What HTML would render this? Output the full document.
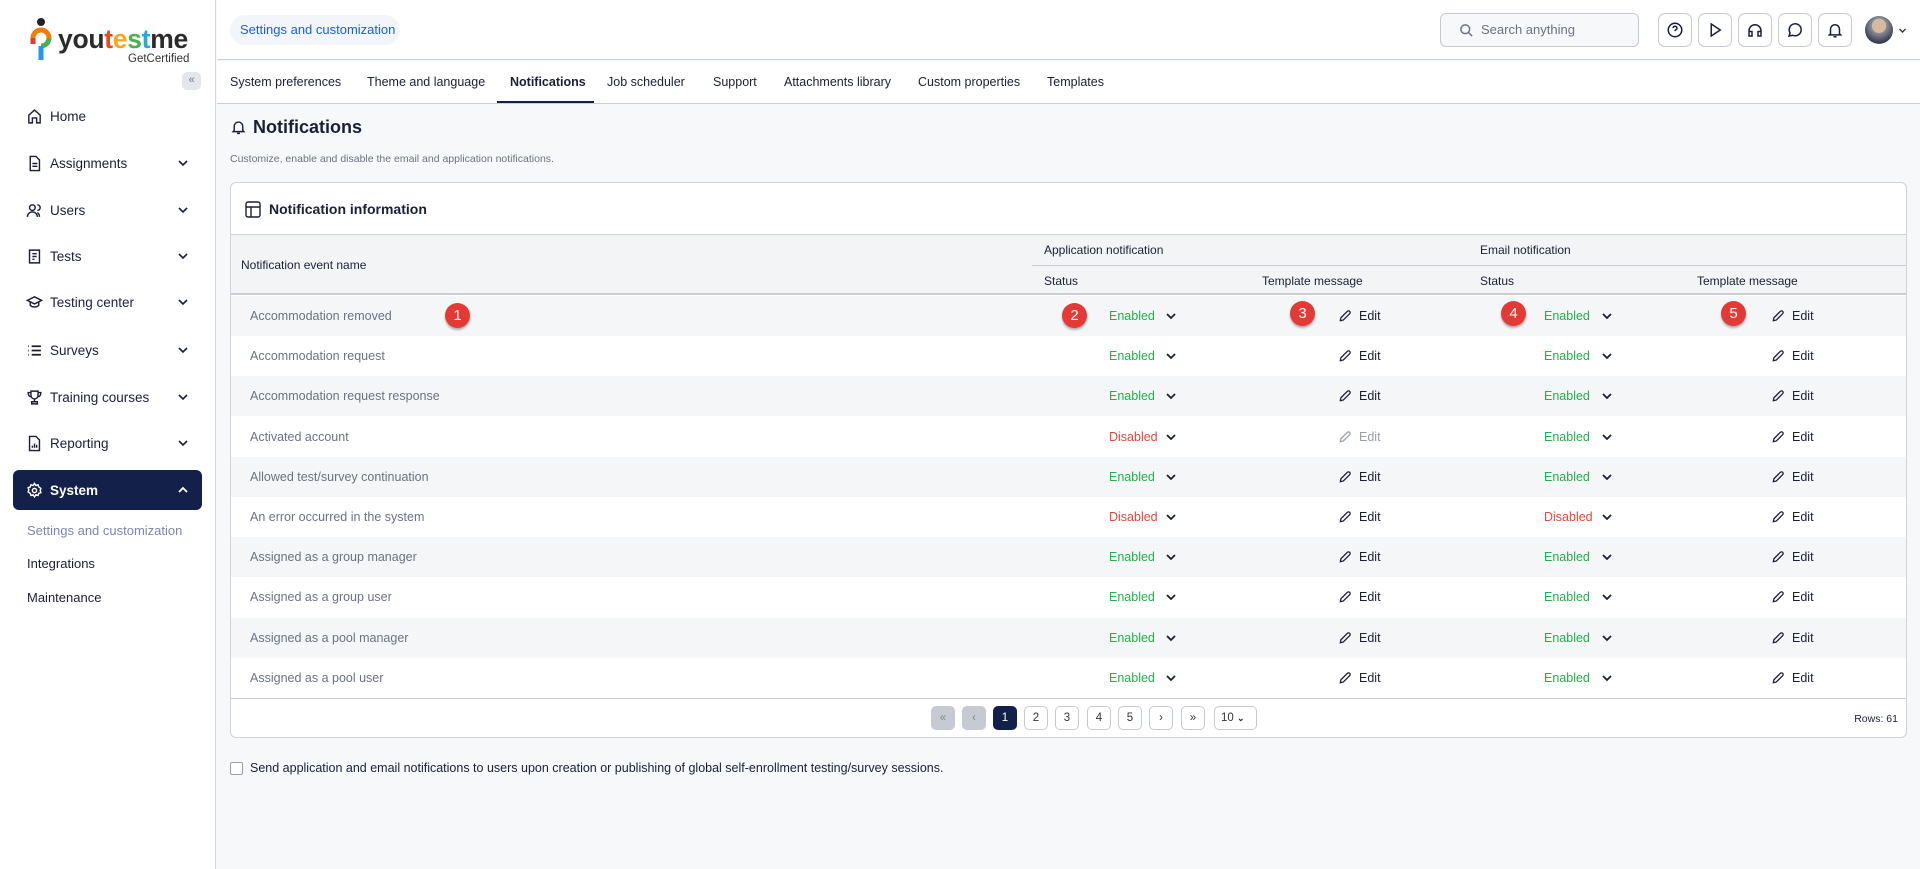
<!DOCTYPE html>
<html><head><meta charset="utf-8"><style>
*{box-sizing:border-box;margin:0;padding:0}
body{width:1920px;height:869px;overflow:hidden;font-family:"Liberation Sans",sans-serif;background:#f7f8fa;color:#1a1f36;position:relative}
.abs{position:absolute}
#side{left:0;top:0;width:216px;height:869px;background:#fff;border-right:1px solid #d5d9e0}
.mi{position:absolute;left:26px;font-size:13.5px;color:#1a1f36;display:flex;align-items:center;height:20px}
.mi svg{width:17px;height:17px;margin-right:7px}
.chev{position:absolute;left:177px;width:12px;height:12px}
#hdr{left:217px;top:0;right:0;height:60px;background:#fff;border-bottom:1px solid #c9ced6}
#tabs{left:217px;top:61px;right:0;height:43px;background:#fff;border-bottom:1px solid #c9ced6}
.tab{position:absolute;top:14px;font-size:12.5px;color:#1a1f36}
.ib{position:absolute;top:13px;width:34px;height:34px;border:1px solid #c5cad3;border-radius:7px;background:#fff;display:flex;align-items:center;justify-content:center}
.ib svg{width:18px;height:18px}
#card{left:230px;top:182px;width:1677px;height:556px;background:#fff;border:1px solid #cfd4db;border-radius:6px;overflow:hidden}
.row{position:absolute;left:0;width:1677px;height:40px;font-size:12.5px}
.row.g{background:#f5f6f8}
.row span{position:absolute;top:13px}
.nm{left:19px;color:#6b7280}
.en{color:#22b04a}.di{color:#f0453a}
.badge{position:absolute;width:25px;height:25px;border-radius:50%;background:#e53935;color:#fff;font-size:15px;text-align:center;line-height:25px;box-shadow:0 2px 2px rgba(0,0,0,.3)}
.pg{position:absolute;top:706px;width:24px;height:24px;border:1px solid #c5cad3;border-radius:5px;font-size:11.5px;text-align:center;line-height:22px;color:#333;background:#fff}
</style></head><body>
<div id="side" class="abs">
  <svg class="abs" style="left:30px;top:18px" width="22" height="46" viewBox="0 0 22 46"><circle cx="11" cy="4" r="4" fill="#222"/><path d="M3 20a8 8 0 0 1 16 0" stroke="#f57c00" stroke-width="5" fill="none"/><path d="M19 20a8 8 0 0 1-8 8" stroke="#4caf50" stroke-width="5" fill="none"/><path d="M11 28v14" stroke="#2196f3" stroke-width="5"/><path d="M3 20v6" stroke="#e53935" stroke-width="5"/></svg>
  <div class="abs" style="left:58px;top:24px;font-size:26.5px;font-weight:bold;letter-spacing:-0.3px;color:#2b2b2b">you<span style="color:#e8491d">t</span><span style="color:#f5a623">e</span><span style="color:#4caf50">s</span><span style="color:#29a8e0">t</span>me</div>
  <div class="abs" style="left:128px;top:53px;font-size:11.5px;color:#333">GetCertified</div>
  <div class="abs" style="left:182px;top:72px;width:19px;height:18px;background:#e3e6ea;border-radius:5px;font-size:11px;color:#777;text-align:center;line-height:17px">«</div>
  <div class="mi" style="top:106px"><svg viewBox="0 0 24 24" fill="none" stroke="#1a1f36" stroke-width="2"><path d="M4 21V10l8-7 8 7v11h-5v-7H9v7z"/></svg>Home</div>
  <div class="mi" style="top:153px"><svg viewBox="0 0 24 24" fill="none" stroke="#1a1f36" stroke-width="2"><path d="M6 2h8l5 5v15H6z M9 12h7M9 16h7"/></svg>Assignments</div>
  <div class="mi" style="top:200px"><svg viewBox="0 0 24 24" fill="none" stroke="#1a1f36" stroke-width="2"><circle cx="9" cy="8" r="4"/><path d="M2 21c0-4 3-7 7-7s7 3 7 7M16 4a4 4 0 0 1 0 8M19 21c0-3-1-5-3-6"/></svg>Users</div>
  <div class="mi" style="top:246px"><svg viewBox="0 0 24 24" fill="none" stroke="#1a1f36" stroke-width="2"><path d="M5 3h14v18H5z M9 8h6M9 12h6M9 16h3"/></svg>Tests</div>
  <div class="mi" style="top:292px"><svg viewBox="0 0 24 24" fill="none" stroke="#1a1f36" stroke-width="2"><path d="M2 9l10-5 10 5-10 5z M6 11v5c3 3 9 3 12 0v-5"/></svg>Testing center</div>
  <div class="mi" style="top:340px"><svg viewBox="0 0 24 24" fill="none" stroke="#1a1f36" stroke-width="2.4"><path d="M3 6h1M3 12h1M3 18h1M8 6h13M8 12h13M8 18h13"/></svg>Surveys</div>
  <div class="mi" style="top:387px"><svg viewBox="0 0 24 24" fill="none" stroke="#1a1f36" stroke-width="2"><path d="M7 3h10v6a5 5 0 0 1-10 0z M7 5H3c0 4 2 6 4 6M17 5h4c0 4-2 6-4 6M12 14v4M8 21h8v-3H8z"/></svg>Training courses</div>
  <div class="mi" style="top:433px"><svg viewBox="0 0 24 24" fill="none" stroke="#1a1f36" stroke-width="2"><path d="M5 2h9l5 5v15H5z M9 18v-3M12 18v-6M15 18v-4"/></svg>Reporting</div>
  <svg class="chev" style="top:157px" viewBox="0 0 12 12"><path d="M2 4l4 4 4-4" stroke="#1a1f36" stroke-width="1.6" fill="none"/></svg>
  <svg class="chev" style="top:204px" viewBox="0 0 12 12"><path d="M2 4l4 4 4-4" stroke="#1a1f36" stroke-width="1.6" fill="none"/></svg>
  <svg class="chev" style="top:250px" viewBox="0 0 12 12"><path d="M2 4l4 4 4-4" stroke="#1a1f36" stroke-width="1.6" fill="none"/></svg>
  <svg class="chev" style="top:296px" viewBox="0 0 12 12"><path d="M2 4l4 4 4-4" stroke="#1a1f36" stroke-width="1.6" fill="none"/></svg>
  <svg class="chev" style="top:344px" viewBox="0 0 12 12"><path d="M2 4l4 4 4-4" stroke="#1a1f36" stroke-width="1.6" fill="none"/></svg>
  <svg class="chev" style="top:391px" viewBox="0 0 12 12"><path d="M2 4l4 4 4-4" stroke="#1a1f36" stroke-width="1.6" fill="none"/></svg>
  <svg class="chev" style="top:437px" viewBox="0 0 12 12"><path d="M2 4l4 4 4-4" stroke="#1a1f36" stroke-width="1.6" fill="none"/></svg>
  <div class="abs" style="left:13px;top:470px;width:189px;height:40px;background:#13204a;border-radius:6px"></div>
  <div class="mi" style="top:480px;color:#fff;font-weight:bold"><svg viewBox="0 0 24 24" fill="none" stroke="#fff" stroke-width="2"><circle cx="12" cy="12" r="3"/><path d="M12 2l2 3 3-1 1 3 3 2-1 3 1 3-3 1-1 3-3-1-2 3-2-3-3 1-1-3-3-2 1-3-1-3 3-1 1-3 3 1z"/></svg>System</div>
  <svg class="chev" style="top:484px" viewBox="0 0 12 12"><path d="M2 8l4-4 4 4" stroke="#fff" stroke-width="1.8" fill="none"/></svg>
  <div class="abs" style="left:27px;top:523px;font-size:13px;color:#7d86b0">Settings and customization</div>
  <div class="abs" style="left:27px;top:556px;font-size:13px">Integrations</div>
  <div class="abs" style="left:27px;top:590px;font-size:13px">Maintenance</div>
</div>

<div id="hdr" class="abs">
  <div class="abs" style="left:13px;top:15px;width:170px;height:30px;background:#f2f5fa;border-radius:15px;font-size:13px;color:#1a5fd6;line-height:30px;padding-left:10px">Settings and customization</div>
  <div class="abs" style="left:1223px;top:13px;width:199px;height:34px;border:1px solid #c5cad3;border-radius:6px;background:#f7f8fa;font-size:13px;color:#6b7280;line-height:32px;padding-left:40px">Search anything
    <svg class="abs" style="left:18px;top:9px" width="15" height="15" viewBox="0 0 24 24" fill="none" stroke="#6b7280" stroke-width="2.4"><circle cx="10" cy="10" r="7"/><path d="M15 15l6 6"/></svg></div>
  <div class="ib" style="left:1441px"><svg viewBox="0 0 24 24" fill="none" stroke="#1a1f36" stroke-width="2"><circle cx="12" cy="12" r="9"/><path d="M9.5 9.5a2.5 2.5 0 1 1 3.5 2.3c-.7.4-1 1-1 1.7M12 17h.01"/></svg></div>
  <div class="ib" style="left:1481px"><svg viewBox="0 0 24 24" fill="none" stroke="#1a1f36" stroke-width="2"><path d="M7 4l12 8-12 8z"/></svg></div>
  <div class="ib" style="left:1521px"><svg viewBox="0 0 24 24" fill="none" stroke="#1a1f36" stroke-width="2"><path d="M4 17v-4a8 8 0 0 1 16 0v4M4 14h4v6H4zM16 14h4v6h-4z"/></svg></div>
  <div class="ib" style="left:1561px"><svg viewBox="0 0 24 24" fill="none" stroke="#1a1f36" stroke-width="2"><path d="M4 20l1.5-4A8 8 0 1 1 9 19z"/></svg></div>
  <div class="ib" style="left:1601px"><svg viewBox="0 0 24 24" fill="none" stroke="#1a1f36" stroke-width="2"><path d="M6 17V11a6 6 0 0 1 12 0v6l1.5 1.5h-15zM10 21h4"/></svg></div>
  <div class="abs" style="left:1648px;top:16px;width:28px;height:28px;border-radius:50%;background:radial-gradient(circle at 50% 35%,#d9b9a0 0 30%,#8a8f99 32%,#3b4252 70%)"></div>
  <svg class="abs" style="left:1681px;top:26px" width="9" height="9" viewBox="0 0 12 12"><path d="M2 4l4 4 4-4" stroke="#333" stroke-width="1.8" fill="none"/></svg>
</div>

<div id="tabs" class="abs">
  <div class="tab" style="left:13px">System preferences</div>
  <div class="tab" style="left:150px">Theme and language</div>
  <div class="tab" style="left:293px;font-weight:bold">Notifications</div>
  <div class="abs" style="left:280px;top:40px;width:97px;height:2px;background:#13204a"></div>
  <div class="tab" style="left:390px">Job scheduler</div>
  <div class="tab" style="left:496px">Support</div>
  <div class="tab" style="left:567px">Attachments library</div>
  <div class="tab" style="left:701px">Custom properties</div>
  <div class="tab" style="left:830px">Templates</div>
</div>

<svg class="abs" style="left:230px;top:118px" width="17" height="18" viewBox="0 0 24 24" fill="none" stroke="#1a1f36" stroke-width="2"><path d="M6 17V11a6 6 0 0 1 12 0v6l1.5 1.5h-15zM10 21h4"/></svg>
<div class="abs" style="left:253px;top:117px;font-size:18px;font-weight:bold">Notifications</div>
<div class="abs" style="left:230px;top:153px;font-size:10.5px;color:#6b7280">Customize, enable and disable the email and application notifications.</div>

<div id="card" class="abs">
  <svg class="abs" style="left:14px;top:18px" width="16" height="17" viewBox="0 0 16 17" fill="none" stroke="#1a1f36" stroke-width="1.4"><rect x="1" y="1" width="14" height="15" rx="2"/><path d="M1 6h14M6 6v10"/></svg>
  <div class="abs" style="left:38px;top:18px;font-size:14px;font-weight:bold">Notification information</div>
  <div class="abs" style="left:0;top:51px;width:1677px;height:61px;background:#f3f4f6;border-top:1px solid #c9ced6;border-bottom:2px solid #c9ced6"></div>
  <div class="abs" style="left:801px;top:82px;width:876px;height:1px;background:#c9ced6"></div>
  <div class="abs" style="left:10px;top:75px;font-size:12px">Notification event name</div>
  <div class="abs" style="left:813px;top:60px;font-size:12px">Application notification</div>
  <div class="abs" style="left:1249px;top:60px;font-size:12px">Email notification</div>
  <div class="abs" style="left:813px;top:91px;font-size:12px">Status</div>
  <div class="abs" style="left:1031px;top:91px;font-size:12px">Template message</div>
  <div class="abs" style="left:1249px;top:91px;font-size:12px">Status</div>
  <div class="abs" style="left:1466px;top:91px;font-size:12px">Template message</div>
  <div id="rows"></div>
  <div class="abs" style="left:0;top:515px;width:1677px;height:1px;background:#c9ced6"></div>
  <div class="abs" style="right:8px;top:530px;font-size:10.5px">Rows: 61</div>
</div>
<div class="pg" style="left:931px;background:#c5cad3;color:#888">«</div>
<div class="pg" style="left:962px;background:#c5cad3;color:#888">‹</div>
<div class="pg" style="left:993px;background:#13204a;color:#fff;border-color:#13204a">1</div>
<div class="pg" style="left:1024px">2</div>
<div class="pg" style="left:1055px">3</div>
<div class="pg" style="left:1087px">4</div>
<div class="pg" style="left:1118px">5</div>
<div class="pg" style="left:1149px">›</div>
<div class="pg" style="left:1181px">»</div>
<div class="pg" style="left:1214px;width:43px;text-align:left;padding-left:6px">10 <b style="font-size:9px">⌄</b></div>

<div class="abs" style="left:230px;top:762px;width:13px;height:13px;border:1px solid #9aa0aa;border-radius:2px;background:#fff"></div>
<div class="abs" style="left:250px;top:761px;font-size:12.5px">Send application and email notifications to users upon creation or publishing of global self-enrollment testing/survey sessions.</div>

<div class="badge" style="left:445px;top:303px">1</div>
<div class="badge" style="left:1062px;top:303px">2</div>
<div class="badge" style="left:1290px;top:301px">3</div>
<div class="badge" style="left:1501px;top:301px">4</div>
<div class="badge" style="left:1721px;top:301px">5</div>

<script>
var d=[["Accommodation removed",1,1,1],["Accommodation request",1,1,1],["Accommodation request response",1,1,1],["Activated account",0,2,1],["Allowed test/survey continuation",1,1,1],["An error occurred in the system",0,1,0],["Assigned as a group manager",1,1,1],["Assigned as a group user",1,1,1],["Assigned as a pool manager",1,1,1],["Assigned as a pool user",1,1,1]];
var pen=function(c){return '<svg style="position:absolute;top:13px;left:'+c.x+'px" width="14" height="14" viewBox="0 0 24 24" fill="none" stroke="'+c.col+'" stroke-width="2.2"><path d="M4 20l1-5L16 4a2.8 2.8 0 0 1 4 4L9 19z"/></svg>'};
var chev=function(x){return '<svg style="position:absolute;top:14px;left:'+x+'px" width="12" height="12" viewBox="0 0 12 12"><path d="M2 4l4 4 4-4" stroke="#1a1f36" stroke-width="1.8" fill="none"/></svg>'};
var h='';
d.forEach(function(r,i){
h+='<div class="row'+(i%2==0?' g':'')+'" style="top:'+(113+i*40.2)+'px"><span class="nm">'+r[0]+'</span>';
h+='<span class="'+(r[1]?'en':'di')+'" style="left:878px">'+(r[1]?'Enabled':'Disabled')+'</span>'+chev(934);
var g=r[2]==2;h+=pen({x:1107,col:g?'#9aa0aa':'#1a1f36'})+'<span style="left:1128px;color:'+(g?'#9aa0aa':'#1a1f36')+'">Edit</span>';
h+='<span class="'+(r[3]?'en':'di')+'" style="left:1313px">'+(r[3]?'Enabled':'Disabled')+'</span>'+chev(1370);
h+=pen({x:1540,col:'#1a1f36'})+'<span style="left:1561px">Edit</span></div>';
});
document.getElementById('rows').outerHTML=h;
</script>
</body></html>
